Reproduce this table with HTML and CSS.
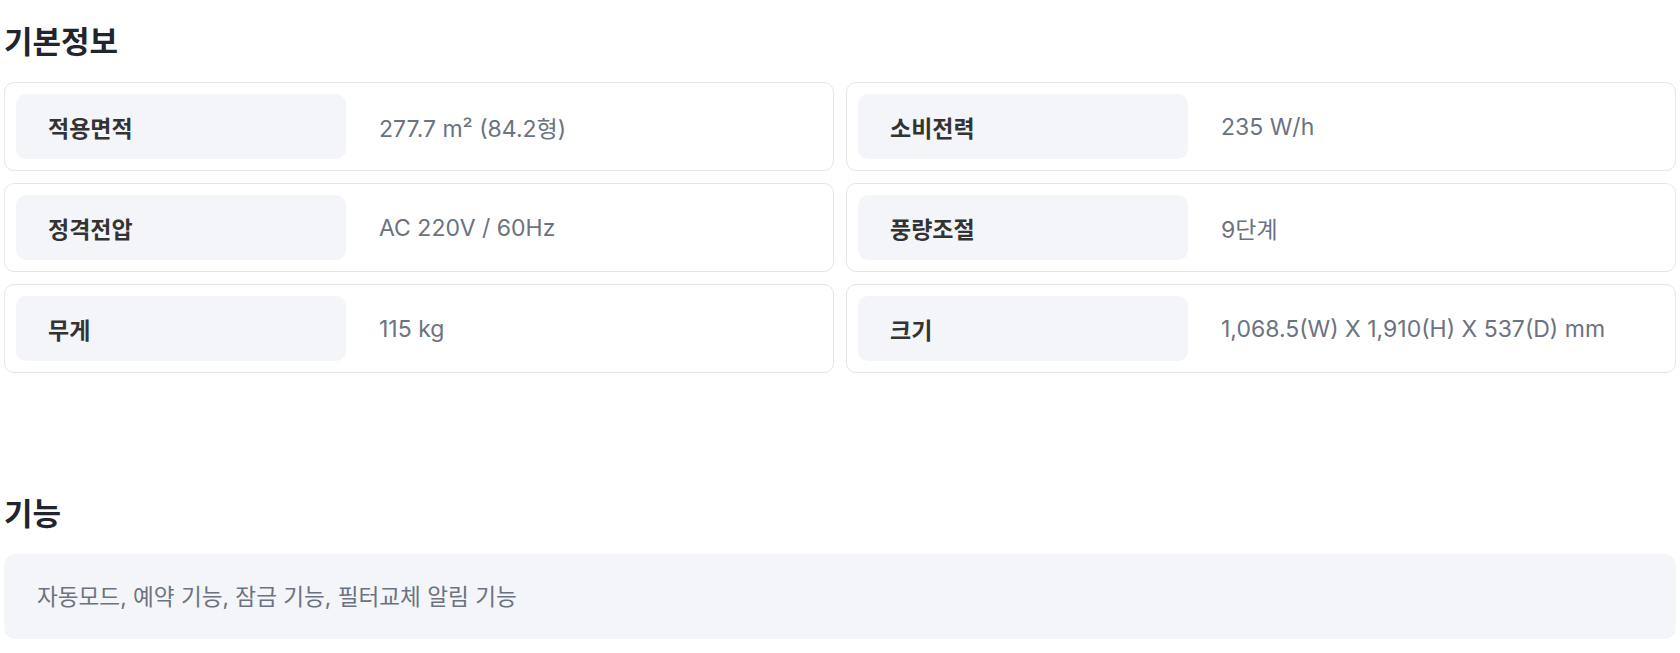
FILE: index.html
```html
<!DOCTYPE html>
<html lang="ko">
<head>
<meta charset="utf-8">
<title>제품 정보</title>
<link rel="stylesheet" href="styles.css">
</head>
<body>
<main class="page">
  <section class="section">
    <h2 class="section-title">기본정보</h2>
    <div class="spec-grid">
      <div class="spec-card">
        <div class="spec-label">적용면적</div>
        <div class="spec-value">277.7 m² (84.2형)</div>
      </div>
      <div class="spec-card">
        <div class="spec-label">소비전력</div>
        <div class="spec-value">235 W/h</div>
      </div>
      <div class="spec-card">
        <div class="spec-label">정격전압</div>
        <div class="spec-value">AC 220V / 60Hz</div>
      </div>
      <div class="spec-card">
        <div class="spec-label">풍량조절</div>
        <div class="spec-value">9단계</div>
      </div>
      <div class="spec-card">
        <div class="spec-label">무게</div>
        <div class="spec-value">115 kg</div>
      </div>
      <div class="spec-card">
        <div class="spec-label">크기</div>
        <div class="spec-value">1,068.5(W) X 1,910(H) X 537(D) mm</div>
      </div>
    </div>
  </section>
  <section class="section section-features">
    <h2 class="section-title">기능</h2>
    <div class="feature-box">자동모드, 예약 기능, 잠금 기능, 필터교체 알림 기능</div>
  </section>
</main>
</body>
</html>
```
FILE: styles.css
```css
* {
  box-sizing: border-box;
}

html, body {
  margin: 0;
  padding: 0;
  background: #ffffff;
}

body {
  font-family: Inter, "Noto Sans CJK KR", sans-serif;
  color: #333333;
}

.page {
  padding: 20px 4px 0;
}

.section-title {
  margin: 0 0 22px;
  font-family: "Noto Sans CJK KR", sans-serif;
  font-size: 31px;
  font-weight: 700;
  line-height: 40px;
  color: #22242e;
}

.section-features {
  margin-top: 119px;
}

.spec-grid {
  display: grid;
  grid-template-columns: 1fr 1fr;
  gap: 12px;
}

.spec-card {
  display: flex;
  align-items: center;
  padding: 11px;
  border: 1px solid #e6e6e8;
  border-radius: 10px;
  background: #ffffff;
}

.spec-label {
  flex: 0 0 330px;
  height: 65px;
  display: flex;
  align-items: center;
  padding-left: 32px;
  border-radius: 10px;
  background: #f4f5f9;
  font-family: "Noto Sans CJK KR", sans-serif;
  font-size: 23px;
  font-weight: 700;
  color: #333333;
}

.spec-value {
  padding-left: 33px;
  font-size: 23px;
  color: #6b7280;
}

.feature-box {
  padding: 28px 33px;
  border-radius: 12px;
  background: #f4f5f9;
  font-size: 22.6px;
  line-height: 29px;
  color: #6b7280;
}
```
